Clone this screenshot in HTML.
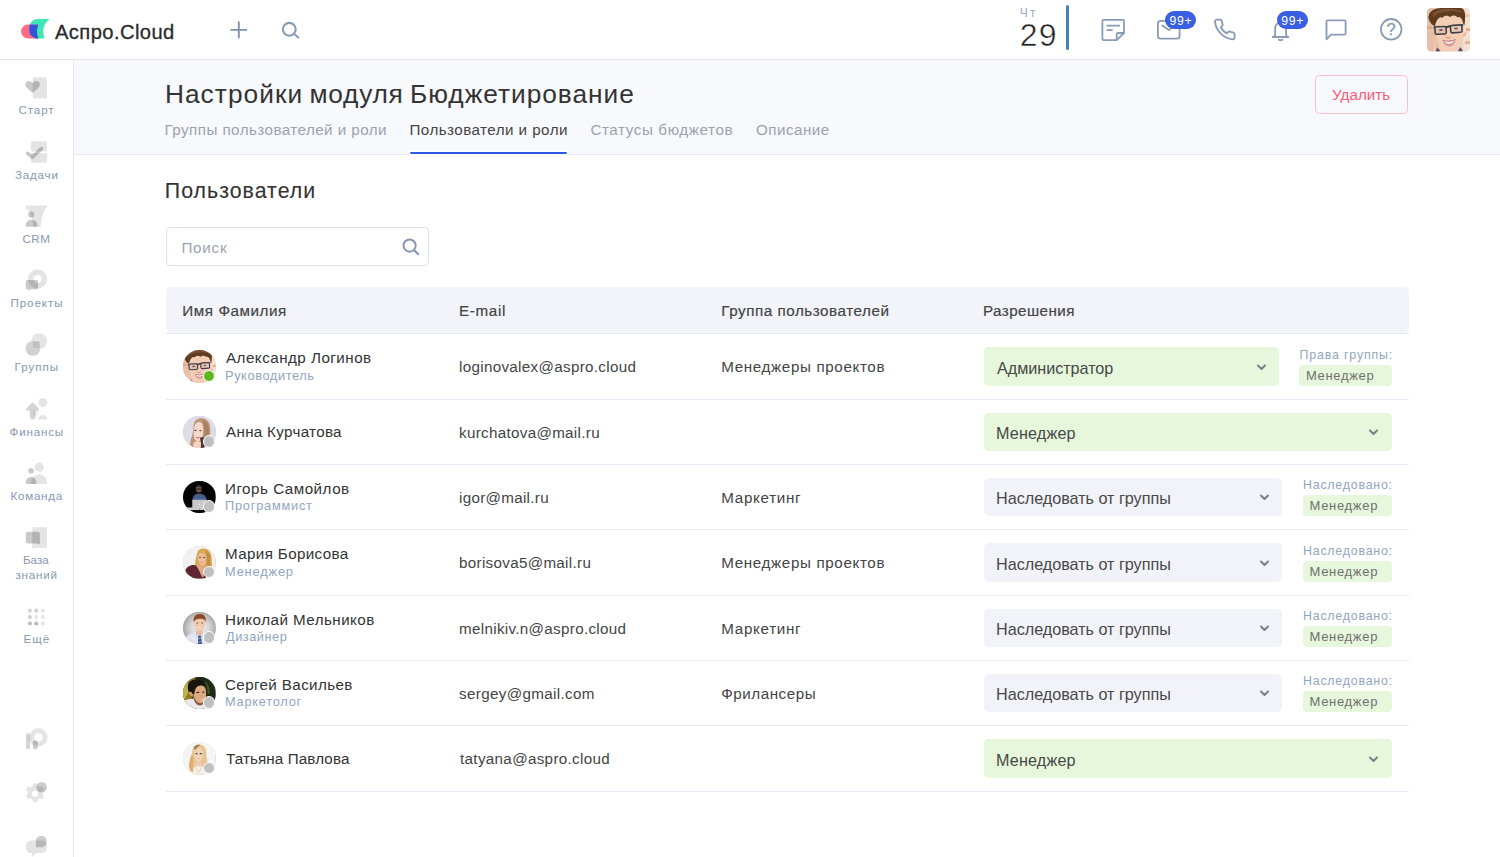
<!DOCTYPE html>
<html lang="ru">
<head>
<meta charset="utf-8">
<title>Настройки модуля Бюджетирование</title>
<style>
*{box-sizing:border-box;margin:0;padding:0}
html,body{width:1500px;height:857px;overflow:hidden;background:#fff}
body{font-family:"Liberation Sans",sans-serif;color:#333;position:relative}
.abs{position:absolute}
.t{position:absolute;white-space:nowrap;line-height:1}
#topbar{position:absolute;left:0;top:0;width:1500px;height:60px;background:#fff;border-bottom:1px solid #e4e7f2}
#side{position:absolute;left:0;top:60px;width:74px;height:797px;background:#fff;border-right:1px solid #e4e7f2}
#phead{position:absolute;left:74px;top:60px;width:1426px;height:95px;background:#f8f9fd;border-bottom:1px solid #e6e9f3}
#tabw{position:absolute;left:409.4px;top:151px;width:158.6px;height:4px;background:#fff}
#tabline{position:absolute;left:410.2px;top:152px;width:156.6px;height:2.2px;background:#2f5ae3;border-radius:1px}
#del{position:absolute;left:1315px;top:75px;width:93px;height:39px;border:1px solid #fbbfca;border-radius:4.5px;background:transparent}
#search{position:absolute;left:166px;top:227px;width:263px;height:39px;border:1px solid #dce1ea;border-radius:4px;background:#fff}
#thead{position:absolute;left:166px;top:287px;width:1243px;height:46.4px;background:#f3f4fa;border-radius:5px}
.rowline{left:166px;width:1243px;height:1px;background:#e6e9f3}
.av{width:32.6px;height:32.6px;border-radius:50%;overflow:hidden;background:#ccc}
.av svg{display:block;width:100%;height:100%}
.dot{width:12.4px;height:12.4px;border-radius:50%;background:#c0c0c0;border:1.8px solid #fff}
.dot.on{background:#5eb61f}
.sel{height:38.4px;border-radius:5px;background:#f2f3f9}
.sel.g{background:#e6f7dc}
.rb{height:21px;border-radius:4px;background:#e6f7dc}
.bdg{height:17.6px;border-radius:9px;background:#3b5fe2}
</style>
</head>
<body>
<div id="topbar"></div>
<div id="side"></div>
<div id="phead"></div>
<div id="tabw"></div><div id="tabline"></div>
<div id="del"></div>
<div id="search"><svg class="abs" style="left:233.5px;top:9.3px" width="20" height="20" viewBox="0 0 20 20"><circle cx="8.6" cy="8.6" r="6.1" fill="none" stroke="#8394b0" stroke-width="1.9"/><path d="M13.2 13.2 L17.2 17.2" stroke="#8394b0" stroke-width="2" stroke-linecap="round"/></svg></div>
<div id="thead"></div><div class="abs rowline" style="top:333px"></div>

<svg class="abs" width="0" height="0" style="left:0;top:0"><defs><filter id="b6" x="-10%" y="-10%" width="120%" height="120%"><feGaussianBlur stdDeviation="0.75"/></filter><filter id="b5" x="-10%" y="-10%" width="120%" height="120%"><feGaussianBlur stdDeviation="0.5"/></filter><filter id="b3" x="-10%" y="-10%" width="120%" height="120%"><feGaussianBlur stdDeviation="0.5"/></filter></defs></svg>
<!-- logo -->
<svg class="abs" style="left:15px;top:10px" width="45" height="40" viewBox="15 10 45 40">
<path d="M28.1 24.5 H38 V38.6 H28.1 A7.05 7.05 0 0 1 28.1 24.5 Z" fill="#ff6b86"/>
<path d="M36.3 18.9 L49.6 18.9 Q40.3 26.5 44.6 38.6 L38.4 38.6 Q35.3 31.5 38.5 24.6 L29.9 24.6 Q31.6 20 36.3 18.9 Z" fill="#3ee6b8"/>
<path d="M29.9 24.6 L38.5 24.6 Q35.3 31.5 38.4 38.6 L36.2 38.6 Q29.1 36.5 29.1 30 Q29.1 27 29.9 24.6 Z" fill="#3355d8"/>
</svg>
<!-- plus -->
<svg class="abs" style="left:228px;top:20px" width="22" height="22" viewBox="0 0 22 22"><path d="M10.8 1.6 V18.2 M2.5 9.9 H19" stroke="#8092b0" stroke-width="1.9" fill="none"/></svg>
<!-- search -->
<svg class="abs" style="left:278px;top:19px" width="24" height="24" viewBox="0 0 24 24"><circle cx="11.3" cy="10.3" r="6.4" fill="none" stroke="#8a9bb5" stroke-width="2.1"/><path d="M16.2 15 L20.3 18.5" stroke="#8a9bb5" stroke-width="2.1" stroke-linecap="round"/></svg>
<!-- date bar -->
<div class="abs" style="left:1066px;top:5px;width:3.2px;height:45px;border-radius:2px;background:#4682b8"></div>
<!-- note -->
<svg class="abs" style="left:1098px;top:16px" width="30" height="28" viewBox="1098 16 30 28" fill="none" stroke="#8a9bb8" stroke-width="1.8" stroke-linecap="round" stroke-linejoin="round">
<path d="M1103.6 19.9 H1122.8 a1.2 1.2 0 0 1 1.2 1.2 V33 L1116.7 40.2 H1103.6 a1.2 1.2 0 0 1 -1.2 -1.2 V21.1 a1.2 1.2 0 0 1 1.2 -1.2 Z"/>
<path d="M1116.7 40 V34.4 a1.4 1.4 0 0 1 1.4 -1.4 H1124"/>
<path d="M1107.2 25.6 H1119.4 M1107.2 30.1 H1112"/>
</svg>
<!-- mail -->
<svg class="abs" style="left:1154px;top:16px" width="30" height="28" viewBox="1154 16 30 28" fill="none" stroke="#8a9bb8" stroke-width="1.8" stroke-linecap="round" stroke-linejoin="round">
<rect x="1157.9" y="20.9" width="21.7" height="17.8" rx="2.6"/>
<path d="M1162.2 25.6 L1168.9 30 L1175.6 25.6"/>
</svg>
<div class="abs bdg" style="left:1165px;top:11.4px;width:31.2px"></div>
<!-- phone -->
<svg class="abs" style="left:1212px;top:17px" width="26" height="26" viewBox="0 0 26 26"><g transform="translate(0.9,0.7) scale(0.985)" fill="none" stroke="#8a9bb8" stroke-width="1.85" stroke-linecap="round" stroke-linejoin="round"><path d="M22 16.92v3a2 2 0 0 1-2.18 2 19.79 19.79 0 0 1-8.63-3.07 19.5 19.5 0 0 1-6-6 19.79 19.79 0 0 1-3.07-8.67A2 2 0 0 1 4.11 2h3a2 2 0 0 1 2 1.72 12.84 12.84 0 0 0 .7 2.81 2 2 0 0 1-.45 2.11L8.09 9.91a16 16 0 0 0 6 6l1.27-1.27a2 2 0 0 1 2.11-.45 12.84 12.84 0 0 0 2.81.7A2 2 0 0 1 22 16.92z"/></g></svg>
<!-- bell -->
<svg class="abs" style="left:1268px;top:16px" width="26" height="28" viewBox="1268 16 26 28" fill="none" stroke="#8a9bb8" stroke-width="1.8" stroke-linecap="round" stroke-linejoin="round">
<path d="M1272.8 37 H1288.4"/>
<path d="M1274.6 37 C1275.6 34 1275 31 1275.2 28 a5.4 5.4 0 0 1 10.8 0 C1286.2 31 1285.6 34 1286.6 37"/>
<path d="M1278.8 39.6 Q1280.6 41 1282.4 39.6"/>
</svg>
<div class="abs bdg" style="left:1276.8px;top:11.4px;width:31px"></div>
<!-- chat -->
<svg class="abs" style="left:1322px;top:16px" width="28" height="28" viewBox="1322 16 28 28" fill="none" stroke="#8a9bb8" stroke-width="1.8" stroke-linecap="round" stroke-linejoin="round">
<path d="M1326.5 39.4 V21.6 a1.2 1.2 0 0 1 1.2 -1.2 H1344.4 a1.2 1.2 0 0 1 1.2 1.2 V33.5 a1.2 1.2 0 0 1 -1.2 1.2 H1330.9 Z"/>
</svg>
<!-- help -->
<svg class="abs" style="left:1378px;top:16px" width="27" height="27" viewBox="1378 16 27 27"><circle cx="1391.2" cy="29.3" r="10.3" fill="none" stroke="#8a9bb8" stroke-width="1.8"/><text x="1391.2" y="35" text-anchor="middle" font-family="Liberation Sans, sans-serif" font-size="16.5" fill="#8a9bb8" stroke="#8a9bb8" stroke-width="0.3">?</text></svg>
<!-- user -->
<svg class="abs" style="left:1427px;top:8.3px" width="43" height="43.5" viewBox="0 0 43 43.5"><defs><clipPath id="uc"><rect width="43" height="43.5" rx="4.5"/></clipPath></defs><g clip-path="url(#uc)"><rect width="43" height="43.5" fill="#efd9c9"/>
<g filter="url(#b6)">
<rect x="-2" y="-2" width="9" height="48" fill="#e7bfa6"/>
<rect x="1" y="8" width="4" height="3" fill="#e19a7a"/><rect x="0" y="18" width="5" height="3" fill="#e3a88c"/><rect x="2" y="30" width="6" height="4" fill="#e8c0aa"/>
<rect x="37" y="-2" width="8" height="48" fill="#f3e2d4"/>
<rect x="39" y="20" width="4" height="3" fill="#f0a984"/><rect x="38" y="33" width="5" height="3" fill="#eeb090"/><rect x="38" y="6" width="4" height="3" fill="#efc4ac"/>
<path d="M8 14 C8 8 14 5 22 5 C30 5 36 8 36 15 L37 27 C37 36 31 46 22 46 C13 46 8 38 7.5 28 Z" fill="#f4cdb7"/>
<path d="M5.5 24 a1.8 3 0 0 0 3 3 Z M39 23 a1.8 3 0 0 1 -3 4 Z" fill="#eeb49b"/>
<path d="M9 24 C9 34 13 40 15 44 L9 44 C7 38 7 30 7.5 25 Z" fill="#ecc0a8"/>
<path d="M1.5 9 C2 3 8 0 14 0 L34 0 C38 1 38.5 6 38 11 C38 15 37.5 19 36.5 17 C36 12 34 9 31 8 C25 6.5 16 7 12 10 C9.5 12 8.5 15 8 18.5 C5 17 2 14 1.5 9 Z" fill="#5e3b22"/>
<path d="M9 11 L12 7.5 L15 10 L19 6.8 L23 9 L27 6.8 L31 9.5 L33 8 L30 5 L12 5 Z" fill="#5e3b22"/>
<path d="M6 5 C10 1 18 0 24 1 C30 1 35 2 36 5 C30 3 22 3 16 4 C11 5 8 7 6 10 Z" fill="#7a5030"/>
<path d="M18 28 Q20.8 30.2 24 28.2 L23.5 30 Q21 31.2 18.6 29.8Z" fill="#d99a86"/>
</g>
<g filter="url(#b3)">
<path d="M6.5 18.6 L19 18.2 L23.5 17 L36 16.2 L36 18 L23.8 19 L19 20.2 L6.5 20.4 Z" fill="#35363c"/>
<rect x="8" y="18.6" width="11.2" height="7.6" rx="1.6" fill="#e3c1ae" stroke="#3d3e45" stroke-width="1.55" transform="rotate(-2 13 22)"/>
<rect x="23.6" y="17.2" width="11.4" height="7.4" rx="1.6" fill="#e9c9b7" stroke="#3d3e45" stroke-width="1.55" transform="rotate(-4 29 21)"/>
<ellipse cx="14" cy="22" rx="2" ry="1" fill="#6b5a58"/><ellipse cx="29" cy="20.6" rx="2" ry="1" fill="#6b5a58"/>
<path d="M15.6 32 Q22 34.4 28.8 31.2 Q27.6 38.6 21.6 38.4 Q17 38 15.6 32 Z" fill="#d79a98"/>
<path d="M16.8 32.6 Q22 34.8 27.8 32 Q26 35.6 21.8 35.8 Q18.4 35.6 16.8 32.6Z" fill="#f7efee"/>
<path d="M15.4 31.8 Q22 34.2 29 31 L28.6 32 Q22 35 15.8 32.6Z" fill="#c27a7c"/>
<path d="M8 43.5 L10.5 39.5 L13.5 43.5 Z M36 43.5 L33.6 39 L30.6 43.5Z" fill="#4f4f68"/>
</g></g></svg>

<svg class="abs" style="left:0;top:60px" width="73" height="797" viewBox="0 60 73 797">
<g fill="#000">
<!-- 1 start -->
<rect x="32.7" y="77.2" width="14.3" height="21.2" rx="2" opacity=".105"/>
<path d="M32.6 92.8 C29 89.6 25.3 87.2 25.3 84.4 C25.3 82.4 26.9 81 28.8 81 C30.4 81 31.8 81.9 32.6 83.3 C33.4 81.9 34.8 81 36.4 81 C38.3 81 39.9 82.4 39.9 84.4 C39.9 87.2 36.2 89.6 32.6 92.8 Z" opacity=".21"/>
<!-- 2 tasks -->
<rect x="31" y="141.2" width="16" height="10.4" rx="1.6" opacity=".105"/>
<rect x="31" y="153" width="16" height="9.7" rx="1.6" opacity=".105"/>
<path d="M27.6 153.4 L32.4 157.3 L41.3 148.6" fill="none" stroke="#000" stroke-width="3.7" stroke-linecap="round" stroke-linejoin="round" opacity=".21"/>
<!-- 3 crm -->
<path d="M25.8 205.6 H47 V207.4 C44.5 209 41.6 214 40.6 226.8 H33.2 C32.8 217 30 210 25.8 208.4 Z" opacity=".105"/>
<circle cx="31.2" cy="214.6" r="3.1" opacity=".21"/>
<path d="M25.8 226.8 V225.2 C25.8 222.2 28.2 219.8 31.2 219.8 H32 C35 219.8 37.4 222.2 37.4 225.2 V226.8 Z" opacity=".21"/>
<!-- 4 projects -->
<path d="M37.6 269.4 a9.6 9.6 0 1 0 0.01 0 Z M37.6 274.9 a4.1 4.1 0 1 1 -0.01 0 Z" fill-rule="evenodd" opacity=".105"/>
<path d="M27.4 279.9 H36.5 a1.6 1.6 0 0 1 1.6 1.6 V287.7 a1.6 1.6 0 0 1 -1.6 1.6 H30.6 L28.4 291.2 V289.3 H27.4 a1.6 1.6 0 0 1 -1.6 -1.6 V281.5 a1.6 1.6 0 0 1 1.6 -1.6 Z" opacity=".21"/>
<!-- 5 groups -->
<circle cx="39.2" cy="341.2" r="7.9" fill="#e5e5e5"/>
<circle cx="32.9" cy="348.4" r="7.4" fill="#d1d1d1"/>
<rect x="33" y="341.4" width="6.6" height="6.6" fill="#bfbfbf"/>
<!-- 6 finance -->
<circle cx="42.8" cy="402.6" r="4.5" opacity=".105"/>
<path d="M38.3 419.6 a4.5 4.5 0 0 1 9 0 Z" opacity=".105"/>
<circle cx="35.8" cy="412.8" r="3.2" opacity=".06"/>
<path d="M31.4 403 a1.6 1.6 0 0 1 2.3 0 L38.8 408.4 a1.2 1.2 0 0 1 -0.9 2 H35.4 V417.2 a2.4 2.4 0 0 1 -2.4 2.4 H32.2 a2.4 2.4 0 0 1 -2.4 -2.4 V410.4 H27.3 a1.2 1.2 0 0 1 -0.9 -2 Z" opacity=".17"/>
<!-- 7 team -->
<circle cx="39.2" cy="467.2" r="4.6" opacity=".105"/>
<path d="M31 483.9 V482.4 C31 478 34.6 474.4 39 474.4 H39.4 C43.6 474.4 47 478 47 482.4 V483.9 Z" opacity=".105"/>
<circle cx="31" cy="470.8" r="2.8" opacity=".21"/>
<path d="M25.8 483.9 V482.2 C25.8 479.3 28.1 477 31 477 C33.9 477 36.3 479.3 36.3 482.2 V483.9 Z" opacity=".21"/>
<!-- 8 kb -->
<path d="M34.2 527.3 H45.4 a1.6 1.6 0 0 1 1.6 1.6 V546.4 a1.6 1.6 0 0 1 -1.6 1.6 H35.4 L32.2 548.8 V529.3 a2 2 0 0 1 2 -2 Z" opacity=".105"/>
<path d="M27.8 531.8 H37.6 a2.3 2.3 0 0 1 2.3 2.3 V544.6 L37.4 543.4 H27.8 a2 2 0 0 1 -2 -2 V533.8 a2 2 0 0 1 2 -2 Z" opacity=".21"/>
<!-- 9 more -->
<circle cx="29.9" cy="610.7" r="2.1" opacity=".16"/><circle cx="36.3" cy="610.7" r="2.1" opacity=".18"/><circle cx="42.8" cy="610.7" r="2.1" opacity=".1"/>
<circle cx="29.9" cy="617.1" r="2.1" opacity=".18"/><circle cx="36.3" cy="617.1" r="2.1" opacity=".1"/><circle cx="42.8" cy="617.1" r="2.1" opacity=".1"/>
<circle cx="29.9" cy="623.5" r="2.1" opacity=".26"/><circle cx="36.3" cy="623.5" r="2.1" opacity=".28"/><circle cx="42.8" cy="623.5" r="2.1" opacity=".1"/>
<!-- b1 -->
<path d="M38.4 728.3 a9.1 9.1 0 1 0 0.01 0 Z M38.4 733.2 a4.2 4.2 0 1 1 -0.01 0 Z" fill-rule="evenodd" opacity=".105"/>
<rect x="26" y="733.3" width="4.2" height="16" rx="2.1" opacity=".17"/>
<rect x="32.8" y="740.6" width="5" height="8.7" rx="2.4" opacity=".2"/>
<!-- b2 gear -->
<path transform="translate(35.1 793.8) scale(1.1) translate(-35.1 -793.8)" d="M33.3 784.4 h3.6 l.6 2.3 a7 7 0 0 1 1.8 1 l2.3 -.7 1.8 3.1 -1.7 1.7 a7 7 0 0 1 0 2.1 l1.7 1.7 -1.8 3.1 -2.3 -.7 a7 7 0 0 1 -1.8 1 l-.6 2.3 h-3.6 l-.6 -2.3 a7 7 0 0 1 -1.8 -1 l-2.3 .7 -1.8 -3.1 1.7 -1.7 a7 7 0 0 1 0 -2.1 l-1.7 -1.7 1.8 -3.1 2.3 .7 a7 7 0 0 1 1.8 -1 Z M35.1 790.9 a2.9 2.9 0 1 0 0.01 0 Z" fill-rule="evenodd" opacity=".105"/>
<circle cx="41.7" cy="787.3" r="5.3" opacity=".2"/>
<!-- b3 chat -->
<path d="M31 840.4 H42 a5 5 0 0 1 5 5 V848 a5 5 0 0 1 -5 5 H36 L32 857 V853 H31 a5.2 5.2 0 0 1 -5.2 -5.2 V845.6 a5.2 5.2 0 0 1 5.2 -5.2 Z" opacity=".105"/>
<path d="M35.8 841.2 a5.5 5.5 0 0 1 11 0 V842 a5.5 5.5 0 0 1 -5.5 5.2 H35.8 Z" opacity=".2"/>
</g>
</svg>

<div class="abs rowline" style="top:399px"></div>
<div class="abs av" style="left:183px;top:350.2px"><svg viewBox="0 0 43 43.5" preserveAspectRatio="none"><rect width="43" height="43.5" fill="#efd9c9"/>
<g filter="url(#b6)">
<rect x="-2" y="-2" width="9" height="48" fill="#e7bfa6"/>
<rect x="1" y="8" width="4" height="3" fill="#e19a7a"/><rect x="0" y="18" width="5" height="3" fill="#e3a88c"/><rect x="2" y="30" width="6" height="4" fill="#e8c0aa"/>
<rect x="37" y="-2" width="8" height="48" fill="#f3e2d4"/>
<rect x="39" y="20" width="4" height="3" fill="#f0a984"/><rect x="38" y="33" width="5" height="3" fill="#eeb090"/><rect x="38" y="6" width="4" height="3" fill="#efc4ac"/>
<path d="M8 14 C8 8 14 5 22 5 C30 5 36 8 36 15 L37 27 C37 36 31 46 22 46 C13 46 8 38 7.5 28 Z" fill="#f4cdb7"/>
<path d="M5.5 24 a1.8 3 0 0 0 3 3 Z M39 23 a1.8 3 0 0 1 -3 4 Z" fill="#eeb49b"/>
<path d="M9 24 C9 34 13 40 15 44 L9 44 C7 38 7 30 7.5 25 Z" fill="#ecc0a8"/>
<path d="M1.5 9 C2 3 8 0 14 0 L34 0 C38 1 38.5 6 38 11 C38 15 37.5 19 36.5 17 C36 12 34 9 31 8 C25 6.5 16 7 12 10 C9.5 12 8.5 15 8 18.5 C5 17 2 14 1.5 9 Z" fill="#5e3b22"/>
<path d="M9 11 L12 7.5 L15 10 L19 6.8 L23 9 L27 6.8 L31 9.5 L33 8 L30 5 L12 5 Z" fill="#5e3b22"/>
<path d="M6 5 C10 1 18 0 24 1 C30 1 35 2 36 5 C30 3 22 3 16 4 C11 5 8 7 6 10 Z" fill="#7a5030"/>
<path d="M18 28 Q20.8 30.2 24 28.2 L23.5 30 Q21 31.2 18.6 29.8Z" fill="#d99a86"/>
</g>
<g filter="url(#b3)">
<path d="M6.5 18.6 L19 18.2 L23.5 17 L36 16.2 L36 18 L23.8 19 L19 20.2 L6.5 20.4 Z" fill="#35363c"/>
<rect x="8" y="18.6" width="11.2" height="7.6" rx="1.6" fill="#e3c1ae" stroke="#3d3e45" stroke-width="1.55" transform="rotate(-2 13 22)"/>
<rect x="23.6" y="17.2" width="11.4" height="7.4" rx="1.6" fill="#e9c9b7" stroke="#3d3e45" stroke-width="1.55" transform="rotate(-4 29 21)"/>
<ellipse cx="14" cy="22" rx="2" ry="1" fill="#6b5a58"/><ellipse cx="29" cy="20.6" rx="2" ry="1" fill="#6b5a58"/>
<path d="M15.6 32 Q22 34.4 28.8 31.2 Q27.6 38.6 21.6 38.4 Q17 38 15.6 32 Z" fill="#d79a98"/>
<path d="M16.8 32.6 Q22 34.8 27.8 32 Q26 35.6 21.8 35.8 Q18.4 35.6 16.8 32.6Z" fill="#f7efee"/>
<path d="M15.4 31.8 Q22 34.2 29 31 L28.6 32 Q22 35 15.8 32.6Z" fill="#c27a7c"/>
<path d="M8 43.5 L10.5 39.5 L13.5 43.5 Z M36 43.5 L33.6 39 L30.6 43.5Z" fill="#4f4f68"/>
</g></svg></div>
<div class="abs dot on" style="left:202.8px;top:369.7px"></div>
<div class="abs sel g" style="left:983.5px;top:347.2px;width:295.5px"></div>
<svg class="abs" style="left:1255.5px;top:363.5px" width="11" height="7" viewBox="0 0 11 7"><path d="M2 1.5 L5.5 4.9 L9 1.5" fill="none" stroke="#7b7f88" stroke-width="2.1" stroke-linecap="round" stroke-linejoin="round"/></svg>
<div class="abs rb" style="left:1299.4px;top:364.5px;width:92.4px"></div>
<div class="abs rowline" style="top:464px"></div>
<div class="abs av" style="left:183px;top:415.7px"><svg viewBox="0 0 33 33"><rect width="33" height="33" fill="#dddde7"/><g filter="url(#b5)">
<path d="M11 8 C12 3 17 1.5 21 2.5 C26 4 28 9 27.6 15 C27.4 21 28 27 27 33 L8 33 C6 30 8 24 9.4 19 C10.4 15 10.4 11 11 8 Z" fill="#bd9474"/>
<path d="M20 4 C24 5 26.5 9 26 15 C25.6 20 26 25 25 30 L21 30 C22.4 22 22.6 12 20 4 Z" fill="#a97f60"/>
<path d="M12 9 C13.5 6 17 5.4 19 7 C20.6 9 20.8 15 20.2 19 C19.6 22.6 17.4 25.4 15 25.6 C12.6 25.4 11 23 10.8 19 C10.6 15 11 11.4 12 9 Z" fill="#f5d9cb"/>
<path d="M17 22 L21.6 21 L21.8 33 L18 33 C18.6 29 18.4 25 17 22 Z" fill="#4b3434"/>
<path d="M10.4 27.4 C12 25.4 16 25 17.6 26.2 C18.8 28 18 31 17.4 33 L11.4 33 C10.6 31 10 29 10.4 27.4 Z" fill="#f3d3c4"/>
<ellipse cx="12.6" cy="14.6" rx="1.2" ry=".7" fill="#4a4048"/><ellipse cx="17.6" cy="14.8" rx="1.2" ry=".7" fill="#4a4048"/>
<path d="M12.4 21 Q14.8 22.2 17.4 21 Q15 24.6 12.4 21Z" fill="#de4a60"/>
</g></svg></div>
<div class="abs dot" style="left:202.8px;top:435.2px"></div>
<div class="abs sel g" style="left:983.5px;top:412.7px;width:408.3px"></div>
<svg class="abs" style="left:1368.3px;top:429.0px" width="11" height="7" viewBox="0 0 11 7"><path d="M2 1.5 L5.5 4.9 L9 1.5" fill="none" stroke="#7b7f88" stroke-width="2.1" stroke-linecap="round" stroke-linejoin="round"/></svg>
<div class="abs rowline" style="top:529px"></div>
<div class="abs av" style="left:183px;top:480.7px"><svg viewBox="0 0 33 33"><rect width="33" height="33" fill="#030303"/><g filter="url(#b5)">
<ellipse cx="16" cy="8" rx="2.9" ry="3.6" fill="#6f5648"/>
<path d="M13 6.6 C13 3.4 19 3.4 19 6.6 C18 5.6 14 5.6 13 6.6Z" fill="#2a2220"/>
<rect x="13.6" y="7.6" width="5" height="1" fill="#221c1c"/>
<path d="M9.4 19.4 C9.6 15.4 11.4 13.2 14 12.8 L18.6 12.8 C21.4 13.2 23.8 15.4 24 19.4 Z" fill="#3b5282"/>
<path d="M11.6 15 h10 v.8 h-10z M10.6 17.2 h12.6 v.8 h-12.6z" fill="#5a74a8"/>
<path d="M14.6 12.8 L16.2 16 L17.8 12.8Z" fill="#6f5648"/>
<rect x="2.6" y="26.8" width="18" height="2.6" fill="#d4d4d4"/>
<rect x="9.4" y="19" width="14.6" height="9.6" rx=".6" fill="#c9c9c9"/>
<circle cx="16.6" cy="23.6" r=".9" fill="#e8e8e8"/>
<rect x="16.2" y="28.2" width=".9" height="1.3" fill="#c8504a"/>
</g></svg></div>
<div class="abs dot" style="left:202.8px;top:500.2px"></div>
<div class="abs sel " style="left:983.5px;top:477.7px;width:298.5px"></div>
<svg class="abs" style="left:1258.5px;top:494.0px" width="11" height="7" viewBox="0 0 11 7"><path d="M2 1.5 L5.5 4.9 L9 1.5" fill="none" stroke="#7b7f88" stroke-width="2.1" stroke-linecap="round" stroke-linejoin="round"/></svg>
<div class="abs rb" style="left:1303.0px;top:495.0px;width:88.8px"></div>
<div class="abs rowline" style="top:595px"></div>
<div class="abs av" style="left:183px;top:546.2px"><svg viewBox="0 0 33 33"><rect width="33" height="33" fill="#f1f1ef"/><g filter="url(#b5)">
<path d="M14 8 C15 3 20 1.4 24 3.4 C28 5.4 29.4 10 29 14 C28.6 17 30.4 19.4 29 21.4 L22 24 L13 21 C11.6 18 13 12 14 8 Z" fill="#d9a956"/>
<path d="M22 4 C26 5 28 9 27.6 13 C27.4 16 28.6 18.6 27.6 20.6 L24 20 C25 14 24.6 8 22 4Z" fill="#c18f3e"/>
<path d="M15 20 L22.4 19 L24 33 L12 33 Z" fill="#e3a684"/>
<path d="M15.6 9.4 C16.6 6.8 20.4 6.2 22 8.4 C23.4 10.6 23.4 14.6 22.2 17.6 C21 20 18.6 20.4 17.2 18.6 C15.4 16.2 15 12 15.6 9.4Z" fill="#ecbf9f"/>
<ellipse cx="17.2" cy="11.6" rx="1.1" ry=".6" fill="#5a5560"/><ellipse cx="21.2" cy="11.6" rx="1.1" ry=".6" fill="#5a5560"/>
<path d="M17.6 16 Q19.2 16.8 20.8 16 Q19.2 17.8 17.6 16Z" fill="#c9786e"/>
<path d="M2.6 24 C4 20.6 9 18.6 12.6 19.4 C15 21 17.4 27.6 19.4 31.4 L21 33 L6 33 C3.4 30 2 27 2.6 24 Z" fill="#5b2531"/>
<path d="M22.6 22 C24 21 25.6 22 25.6 24 L24.6 33 L20.2 33 C21.2 29 22 25 22.6 22Z" fill="#5b2531"/>
</g></svg></div>
<div class="abs dot" style="left:202.8px;top:565.7px"></div>
<div class="abs sel " style="left:983.5px;top:543.2px;width:298.5px"></div>
<svg class="abs" style="left:1258.5px;top:559.5px" width="11" height="7" viewBox="0 0 11 7"><path d="M2 1.5 L5.5 4.9 L9 1.5" fill="none" stroke="#7b7f88" stroke-width="2.1" stroke-linecap="round" stroke-linejoin="round"/></svg>
<div class="abs rb" style="left:1303.0px;top:560.5px;width:88.8px"></div>
<div class="abs rowline" style="top:660px"></div>
<div class="abs av" style="left:183px;top:611.7px"><svg viewBox="0 0 33 33"><defs><radialGradient id="g4" cx=".52" cy=".5" r=".55"><stop offset="0" stop-color="#efefef"/><stop offset=".55" stop-color="#d4d4d4"/><stop offset="1" stop-color="#9f9f9f"/></radialGradient></defs><rect width="33" height="33" fill="url(#g4)"/><g filter="url(#b5)">
<path d="M2 27 C4 23.6 9 21.4 12.6 20 L20.6 20 C24 21 29 23.6 31 27.4 L31 33 L2 33Z" fill="#e2e6f3"/>
<path d="M13 19 L20 19 L19.6 22.6 L16.4 24.6 L13 22Z" fill="#e9b99c"/>
<path d="M11.6 9 C11.6 5 14 3.4 17 3.4 C20.4 3.4 22.4 5.4 22.4 9.4 C22.4 13 21.6 16.4 20 18.6 C18.6 20.4 15.4 20.4 14 18.6 C12.4 16.4 11.6 13 11.6 9Z" fill="#f2c9ae"/>
<path d="M10.8 10 C10 5 13 1.6 17.4 2 C21.4 2.2 23.6 5 23 10 C22 7.6 20 6.4 17.6 6.8 C14.6 6.6 12 7.6 10.8 10Z" fill="#8b4a2a"/>
<ellipse cx="14.6" cy="11.2" rx="1" ry=".55" fill="#5b4a44"/><ellipse cx="19.4" cy="11.2" rx="1" ry=".55" fill="#5b4a44"/>
<path d="M14.8 15.4 Q17 17.4 19.4 15.4 Q17 16.2 14.8 15.4Z" fill="#fff"/>
<path d="M12.4 21 L16.4 24.4 L13.6 26.4Z M20.4 21 L16.6 24.4 L19.6 26.4Z" fill="#cfd6ec"/>
<path d="M15.6 24 L18 24 L19.4 33 L15 33Z" fill="#2f4a82"/>
<path d="M15.6 26.4 L18.6 25.6 L18.8 27 L15.4 27.8Z M15.2 30 L19 29 L19.2 30.4 L15.1 31.4Z" fill="#8aa0cc"/>
</g></svg></div>
<div class="abs dot" style="left:202.8px;top:631.2px"></div>
<div class="abs sel " style="left:983.5px;top:608.7px;width:298.5px"></div>
<svg class="abs" style="left:1258.5px;top:625.0px" width="11" height="7" viewBox="0 0 11 7"><path d="M2 1.5 L5.5 4.9 L9 1.5" fill="none" stroke="#7b7f88" stroke-width="2.1" stroke-linecap="round" stroke-linejoin="round"/></svg>
<div class="abs rb" style="left:1303.0px;top:626.0px;width:88.8px"></div>
<div class="abs rowline" style="top:725px"></div>
<div class="abs av" style="left:183px;top:676.7px"><svg viewBox="0 0 33 33"><rect width="33" height="33" fill="#2b3a1c"/><g filter="url(#b5)">
<path d="M0 0 L13 0 C10 6 9 14 9 24 L0 24Z" fill="#8e7c22"/>
<path d="M3 6 C5 4 7 9 6 14 C5 18 3 20 2 22 L0 22 L0 8Z" fill="#c4b04a"/>
<path d="M13 0 L24 0 C28 4 32 10 33 20 L33 24 L20 24 C20 14 18 6 13 0Z" fill="#1c2a12"/>
<path d="M22 4 C25 6 27 10 27.6 16 L25 18 C25 12 24 8 22 4Z" fill="#3e5224"/>
<path d="M0 24 C4 22.4 10 21.4 14 22.4 L24 25 C26 27 26 31 25 33 L0 33Z" fill="#e9e9ec"/>
<path d="M9.4 16 C9.4 10 14 7.4 18.4 8 C22 8.6 23.4 12 23.4 16 C23.4 20 23 24 20.6 27 C18.4 29.4 14.4 29 12.4 26 C10.4 23 9.4 19.6 9.4 16Z" fill="#dcaa80"/>
<path d="M6 16 a2 2.6 0 0 1 3.4 -1 L10 19.6 C8 19.6 6.4 18 6 16Z" fill="#d39e74"/>
<path d="M10 18 C10.6 22 12 26 14 27.6 C16.4 29.6 19.6 29 21 26.6 L20.6 25.4 C18.6 27.2 15.4 26.8 13.4 24.4 C12 22.6 11.2 20 10.8 18Z" fill="#6a4a34" opacity=".8"/>
<path d="M5 12 C4 6 8 2.6 13 2.6 C18 2.4 21.6 5 22 9.4 C19 8 16 8.6 14 10 C12.6 11.6 11.6 14 11.4 17.6 L9.6 17 C9 15 7 14.6 6 15.4 C5.4 14.4 5.2 13.2 5 12Z" fill="#17130f"/>
<ellipse cx="15" cy="15.6" rx="1.5" ry=".7" fill="#2a1e18"/><ellipse cx="20.6" cy="15.4" rx="1.2" ry=".6" fill="#2a1e18"/>
<path d="M16.6 22.6 Q19 23.6 21.2 21.8 Q19.4 24.6 16.6 22.6Z" fill="#f3e6e0"/>
</g></svg></div>
<div class="abs dot" style="left:202.8px;top:696.2px"></div>
<div class="abs sel " style="left:983.5px;top:673.7px;width:298.5px"></div>
<svg class="abs" style="left:1258.5px;top:690.0px" width="11" height="7" viewBox="0 0 11 7"><path d="M2 1.5 L5.5 4.9 L9 1.5" fill="none" stroke="#7b7f88" stroke-width="2.1" stroke-linecap="round" stroke-linejoin="round"/></svg>
<div class="abs rb" style="left:1303.0px;top:691.0px;width:88.8px"></div>
<div class="abs rowline" style="top:791px"></div>
<div class="abs av" style="left:183px;top:742.2px"><svg viewBox="0 0 33 33"><rect width="33" height="33" fill="#f5f5f3"/><g filter="url(#b5)">
<path d="M9.4 9 C10 3.4 15 1.4 19 3 C23 4.6 24 9 23.6 13 C23.4 16 25.6 19 24.6 22 C23.6 25 21 26 20 28 L9 31 C6 29 5.4 25 6.6 21 C7.6 17.6 8.6 13 9.4 9Z" fill="#e6c591"/>
<path d="M11 5 C13 2.6 16 2.4 18 3.2 C15 4 13.6 6 13 9 C12 8 11 6.6 11 5Z" fill="#a9824f"/>
<path d="M8 14 C7 18 5.6 22 6.6 26 C7.4 28.6 9 30 10.6 30 C9.6 25 10 19 10.6 14Z" fill="#d9b06f"/>
<path d="M12.6 21 L18.6 21 L20.6 33 L10.4 33Z" fill="#efcdb6"/>
<path d="M11.6 10 C12 7 15 5.6 17.4 6.6 C19.6 7.6 20.4 11 19.8 14.4 C19.2 17.8 17.4 20.4 15.4 20.4 C13.2 20.2 11.4 16 11.6 10Z" fill="#f4d3bd"/>
<ellipse cx="13.6" cy="11.8" rx="1.2" ry=".7" fill="#3c3438"/><ellipse cx="18" cy="11.8" rx="1.2" ry=".7" fill="#3c3438"/>
<path d="M14 16.4 Q15.6 17.2 17.4 16.4 Q15.6 18.2 14 16.4Z" fill="#d48a84"/>
<path d="M10.6 26 C12.6 24.4 18.6 24.4 21 26 L22 33 L10 33Z" fill="#f4eee4"/>
<path d="M13 26 L16 31 L19 26" fill="none" stroke="#e2d4c2" stroke-width=".8"/>
</g></svg></div>
<div class="abs dot" style="left:202.8px;top:761.7px"></div>
<div class="abs sel g" style="left:983.5px;top:739.2px;width:408.3px"></div>
<svg class="abs" style="left:1368.3px;top:755.5px" width="11" height="7" viewBox="0 0 11 7"><path d="M2 1.5 L5.5 4.9 L9 1.5" fill="none" stroke="#7b7f88" stroke-width="2.1" stroke-linecap="round" stroke-linejoin="round"/></svg>
<div class="t" style="left:164.90px;top:80.54px;font-size:26.3px;color:#333;letter-spacing:1.050px;">Настройки</div>
<div class="t" style="left:309.40px;top:80.54px;font-size:26.3px;color:#333;letter-spacing:0.760px;">модуля</div>
<div class="t" style="left:410.00px;top:80.54px;font-size:26.3px;color:#333;letter-spacing:0.977px;">Бюджетирование</div>
<div class="t" style="left:164.50px;top:122.13px;font-size:15.2px;color:#9ba3ae;letter-spacing:0.442px;">Группы пользователей и роли</div>
<div class="t" style="left:409.50px;top:122.13px;font-size:15.2px;color:#444;letter-spacing:0.444px;">Пользователи и роли</div>
<div class="t" style="left:590.40px;top:122.13px;font-size:15.2px;color:#9ba3ae;letter-spacing:0.600px;">Статусы бюджетов</div>
<div class="t" style="left:756.00px;top:122.13px;font-size:15.2px;color:#9ba3ae;letter-spacing:0.486px;">Описание</div>
<div class="t" style="left:164.80px;top:180.67px;font-size:21.3px;color:#333;letter-spacing:1.036px;-webkit-text-stroke:0.1px #333;">Пользователи</div>
<div class="t" style="left:181.40px;top:239.63px;font-size:15.2px;color:#9ba3ae;letter-spacing:0.775px;">Поиск</div>
<div class="t" style="left:1332.00px;top:86.93px;font-size:15.2px;color:#f95c7b;letter-spacing:0.050px;">Удалить</div>
<div class="t" style="left:182.30px;top:303.23px;font-size:15.2px;color:#444;letter-spacing:0.570px;-webkit-text-stroke:0.2px #444;">Имя Фамилия</div>
<div class="t" style="left:459.00px;top:303.23px;font-size:15.2px;color:#444;letter-spacing:0.660px;-webkit-text-stroke:0.2px #444;">E-mail</div>
<div class="t" style="left:721.30px;top:303.23px;font-size:15.2px;color:#444;letter-spacing:0.547px;-webkit-text-stroke:0.2px #444;">Группа пользователей</div>
<div class="t" style="left:983.00px;top:303.23px;font-size:15.2px;color:#444;letter-spacing:0.444px;-webkit-text-stroke:0.2px #444;">Разрешения</div>
<div class="t" style="left:226.00px;top:350.33px;font-size:15.2px;color:#333;letter-spacing:0.475px;">Александр Логинов</div>
<div class="t" style="left:225.00px;top:369.66px;font-size:12.8px;color:#93a5c1;letter-spacing:0.591px;">Руководитель</div>
<div class="t" style="left:459.00px;top:359.43px;font-size:15.2px;color:#444;letter-spacing:0.318px;">loginovalex@aspro.cloud</div>
<div class="t" style="left:721.30px;top:359.43px;font-size:15.2px;color:#444;letter-spacing:0.629px;">Менеджеры проектов</div>
<div class="t" style="left:997.00px;top:359.59px;font-size:16.2px;color:#484848;letter-spacing:-0.042px;">Администратор</div>
<div class="t" style="left:1299.60px;top:348.70px;font-size:12.4px;color:#93a5c1;letter-spacing:0.825px;">Права группы:</div>
<div class="t" style="left:1305.90px;top:368.50px;font-size:13px;color:#707070;letter-spacing:0.686px;">Менеджер</div>
<div class="t" style="left:226.00px;top:424.43px;font-size:15.2px;color:#333;letter-spacing:0.308px;">Анна Курчатова</div>
<div class="t" style="left:459.00px;top:424.93px;font-size:15.2px;color:#444;letter-spacing:0.312px;">kurchatova@mail.ru</div>
<div class="t" style="left:996.00px;top:425.09px;font-size:16.2px;color:#484848;letter-spacing:0.143px;">Менеджер</div>
<div class="t" style="left:225.00px;top:480.83px;font-size:15.2px;color:#333;letter-spacing:0.500px;">Игорь Самойлов</div>
<div class="t" style="left:225.00px;top:500.16px;font-size:12.8px;color:#93a5c1;letter-spacing:0.760px;">Программист</div>
<div class="t" style="left:459.00px;top:489.93px;font-size:15.2px;color:#444;letter-spacing:0.300px;">igor@mail.ru</div>
<div class="t" style="left:721.30px;top:489.93px;font-size:15.2px;color:#444;letter-spacing:0.675px;">Маркетинг</div>
<div class="t" style="left:996.00px;top:490.09px;font-size:16.2px;color:#484848;letter-spacing:-0.025px;">Наследовать от группы</div>
<div class="t" style="left:1303.00px;top:479.20px;font-size:12.4px;color:#93a5c1;letter-spacing:0.773px;">Наследовано:</div>
<div class="t" style="left:1309.50px;top:499.00px;font-size:13px;color:#707070;letter-spacing:0.686px;">Менеджер</div>
<div class="t" style="left:225.00px;top:546.33px;font-size:15.2px;color:#333;letter-spacing:0.362px;">Мария Борисова</div>
<div class="t" style="left:225.00px;top:565.66px;font-size:12.8px;color:#93a5c1;letter-spacing:0.843px;">Менеджер</div>
<div class="t" style="left:459.00px;top:555.43px;font-size:15.2px;color:#444;letter-spacing:0.312px;">borisova5@mail.ru</div>
<div class="t" style="left:721.30px;top:555.43px;font-size:15.2px;color:#444;letter-spacing:0.629px;">Менеджеры проектов</div>
<div class="t" style="left:996.00px;top:555.59px;font-size:16.2px;color:#484848;letter-spacing:-0.025px;">Наследовать от группы</div>
<div class="t" style="left:1303.00px;top:544.70px;font-size:12.4px;color:#93a5c1;letter-spacing:0.773px;">Наследовано:</div>
<div class="t" style="left:1309.50px;top:564.50px;font-size:13px;color:#707070;letter-spacing:0.686px;">Менеджер</div>
<div class="t" style="left:225.00px;top:611.83px;font-size:15.2px;color:#333;letter-spacing:0.450px;">Николай Мельников</div>
<div class="t" style="left:226.00px;top:631.16px;font-size:12.8px;color:#93a5c1;letter-spacing:0.514px;">Дизайнер</div>
<div class="t" style="left:459.00px;top:620.93px;font-size:15.2px;color:#444;letter-spacing:0.319px;">melnikiv.n@aspro.cloud</div>
<div class="t" style="left:721.30px;top:620.93px;font-size:15.2px;color:#444;letter-spacing:0.675px;">Маркетинг</div>
<div class="t" style="left:996.00px;top:621.09px;font-size:16.2px;color:#484848;letter-spacing:-0.025px;">Наследовать от группы</div>
<div class="t" style="left:1303.00px;top:610.20px;font-size:12.4px;color:#93a5c1;letter-spacing:0.773px;">Наследовано:</div>
<div class="t" style="left:1309.50px;top:630.00px;font-size:13px;color:#707070;letter-spacing:0.686px;">Менеджер</div>
<div class="t" style="left:225.00px;top:676.83px;font-size:15.2px;color:#333;letter-spacing:0.371px;">Сергей Васильев</div>
<div class="t" style="left:225.00px;top:696.16px;font-size:12.8px;color:#93a5c1;letter-spacing:0.756px;">Маркетолог</div>
<div class="t" style="left:459.00px;top:685.93px;font-size:15.2px;color:#444;letter-spacing:0.353px;">sergey@gmail.com</div>
<div class="t" style="left:721.30px;top:685.93px;font-size:15.2px;color:#444;letter-spacing:0.522px;">Фрилансеры</div>
<div class="t" style="left:996.00px;top:686.09px;font-size:16.2px;color:#484848;letter-spacing:-0.025px;">Наследовать от группы</div>
<div class="t" style="left:1303.00px;top:675.20px;font-size:12.4px;color:#93a5c1;letter-spacing:0.773px;">Наследовано:</div>
<div class="t" style="left:1309.50px;top:695.00px;font-size:13px;color:#707070;letter-spacing:0.686px;">Менеджер</div>
<div class="t" style="left:226.00px;top:750.93px;font-size:15.2px;color:#333;letter-spacing:0.114px;">Татьяна Павлова</div>
<div class="t" style="left:460.00px;top:751.43px;font-size:15.2px;color:#444;letter-spacing:0.333px;">tatyana@aspro.cloud</div>
<div class="t" style="left:996.00px;top:751.59px;font-size:16.2px;color:#484848;letter-spacing:0.143px;">Менеджер</div>
<div class="t" style="left:55.00px;top:21.50px;font-size:20.2px;color:#2b2b2b;letter-spacing:0.400px;-webkit-text-stroke:0.3px #2b2b2b;">Аспро.Cloud</div>
<div class="t" style="left:1019.80px;top:6.84px;font-size:12px;color:#9aa8c0;letter-spacing:2.200px;">Чт</div>
<div class="t" style="left:1019.80px;top:18.91px;font-size:32px;color:#222;letter-spacing:1.200px;-webkit-text-stroke:0.5px #fff;">29</div>
<div class="t" style="left:1169.50px;top:14.87px;font-size:12.2px;color:#fff;letter-spacing:0.750px;">99+</div>
<div class="t" style="left:1281.30px;top:14.87px;font-size:12.2px;color:#fff;letter-spacing:0.750px;">99+</div>
<div class="t" style="left:18.60px;top:104.18px;font-size:11.6px;color:#8798b3;letter-spacing:0.850px;">Старт</div>
<div class="t" style="left:15.00px;top:168.58px;font-size:11.6px;color:#8798b3;letter-spacing:0.800px;">Задачи</div>
<div class="t" style="left:22.50px;top:232.88px;font-size:11.6px;color:#8798b3;letter-spacing:0.500px;">CRM</div>
<div class="t" style="left:10.50px;top:297.18px;font-size:11.6px;color:#8798b3;letter-spacing:0.917px;">Проекты</div>
<div class="t" style="left:14.50px;top:361.48px;font-size:11.6px;color:#8798b3;letter-spacing:1.000px;">Группы</div>
<div class="t" style="left:9.50px;top:425.88px;font-size:11.6px;color:#8798b3;letter-spacing:0.833px;">Финансы</div>
<div class="t" style="left:10.50px;top:490.18px;font-size:11.6px;color:#8798b3;letter-spacing:0.750px;">Команда</div>
<div class="t" style="left:23.00px;top:554.48px;font-size:11.6px;color:#8798b3;letter-spacing:0.000px;">База</div>
<div class="t" style="left:15.50px;top:569.48px;font-size:11.6px;color:#8798b3;letter-spacing:0.800px;">знаний</div>
<div class="t" style="left:23.50px;top:633.48px;font-size:11.6px;color:#8798b3;letter-spacing:1.000px;">Ещё</div>
</body>
</html>
